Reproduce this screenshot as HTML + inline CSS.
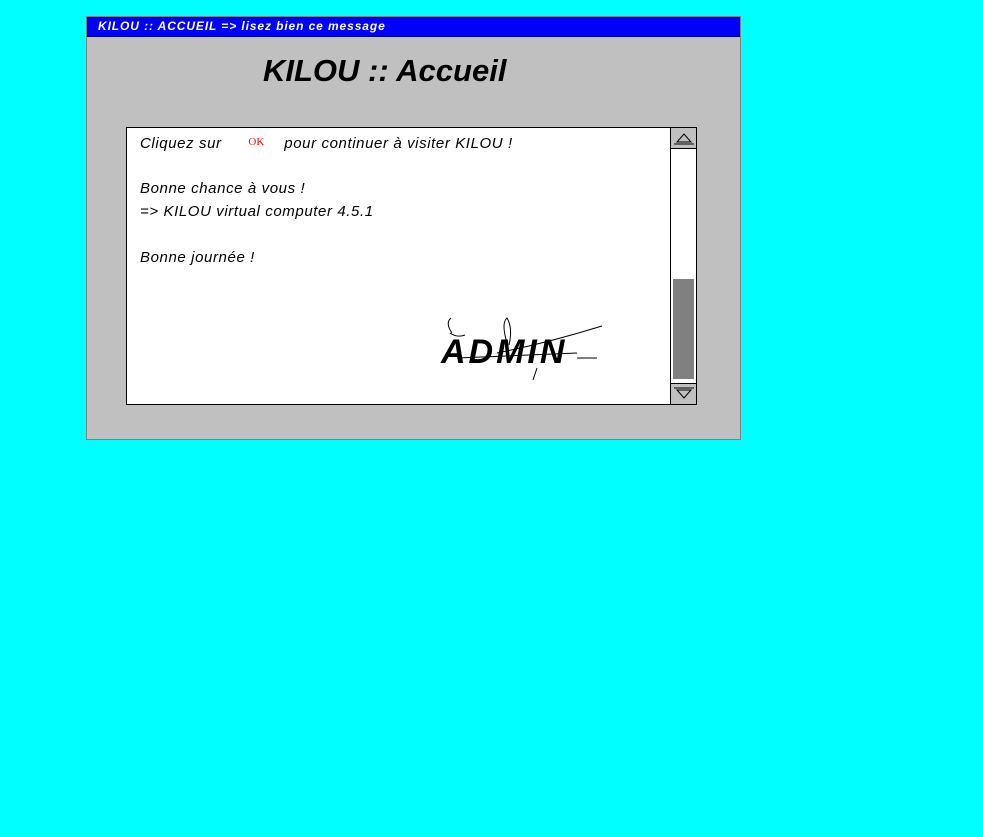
<!DOCTYPE html>
<html><head><meta charset="utf-8"><style>
body{margin:0;background:#00ffff;width:983px;height:837px;overflow:hidden;position:relative;font-family:"Liberation Sans",sans-serif}
.win{position:absolute;left:86px;top:16px;width:653px;height:422px;background:#c0c0c0;border:1px solid #808080}
.tb{position:absolute;left:0;top:0;width:653px;height:20px;background:#0000ff;border-bottom:1px solid #000080;color:#fff;font-style:italic;font-weight:bold;font-size:12px;letter-spacing:0.9px;line-height:19px;padding-left:11px;box-sizing:border-box}
.h{position:absolute;left:176px;top:36px;font-style:italic;font-weight:bold;font-size:31px;color:#000}
.box{position:absolute;left:39px;top:110px;width:569px;height:276px;background:#fff;border:1px solid #000;overflow:hidden}
.t{position:absolute;left:13px;font-style:italic;font-size:15px;letter-spacing:0.6px;color:#000}
.sb{position:absolute;right:0;top:0;width:25px;height:276px;background:#fff;border-left:1px solid #000}
.btn{position:absolute;left:0;width:25px;height:20px;background:#c0c0c0}
.thumb{position:absolute;left:2px;top:151px;width:21px;height:100px;background:#808080}
</style></head><body>
<div class="win">
<div class="tb">KILOU :: ACCUEIL =&gt; lisez bien ce message</div>
<div class="h">KILOU :: Accueil</div>
<div class="box">
<div class="t" style="top:7px">Cliquez sur <span style="color:red;font-style:normal;font-family:'Liberation Serif',serif;font-size:11px;letter-spacing:0;position:relative;top:-3px;margin:0 20px 0 22px">OK</span>pour continuer à visiter KILOU !</div>
<div class="t" style="top:52px">Bonne chance à vous !</div>
<div class="t" style="top:75px">=&gt; KILOU virtual computer 4.5.1</div>
<div class="t" style="top:121px">Bonne journée !</div>
<svg style="position:absolute;left:310px;top:185px" width="170" height="70">
<text x="4" y="50" font-family="Liberation Sans" font-style="italic" font-weight="bold" font-size="34" letter-spacing="3" fill="#000">ADMIN</text>
<path d="M15 20 Q8 10 14 5 M13 20 Q20 25 28 22 M70 30 Q64 10 70 5 Q76 15 72 32 M60 40 Q110 30 165 13 M100 55 L96 67 M140 45 L160 45 M20 45 L140 40" stroke="#000" fill="none" stroke-width="1"/>
</svg>
<div class="sb">
<div class="btn" style="top:0;border-bottom:1px solid #000"><svg width="25" height="20"><path d="M6 14 L13 6 L20 14 Z M3 16 L23 16" stroke="#000" fill="none"/></svg></div>
<div class="thumb"></div>
<div class="btn" style="top:255px;border-top:1px solid #000"><svg width="25" height="20"><path d="M6 6 L13 14 L20 6 Z M3 4 L23 4" stroke="#000" fill="none"/></svg></div>
</div>
</div>
</div>
</body></html>
